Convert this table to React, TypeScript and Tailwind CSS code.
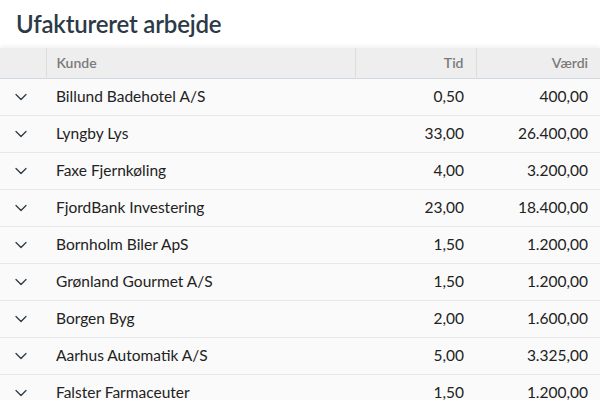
import { ChevronDown } from "lucide-react";

const rows = [
  { kunde: "Billund Badehotel A/S", tid: "0,50", vaerdi: "400,00" },
  { kunde: "Lyngby Lys", tid: "33,00", vaerdi: "26.400,00" },
  { kunde: "Faxe Fjernkøling", tid: "4,00", vaerdi: "3.200,00" },
  { kunde: "FjordBank Investering", tid: "23,00", vaerdi: "18.400,00" },
  { kunde: "Bornholm Biler ApS", tid: "1,50", vaerdi: "1.200,00" },
  { kunde: "Grønland Gourmet A/S", tid: "1,50", vaerdi: "1.200,00" },
  { kunde: "Borgen Byg", tid: "2,00", vaerdi: "1.600,00" },
  { kunde: "Aarhus Automatik A/S", tid: "5,00", vaerdi: "3.325,00" },
  { kunde: "Falster Farmaceuter", tid: "1,50", vaerdi: "1.200,00" },
];

export default function App() {
  return (
    <div className="w-[600px] h-[400px] overflow-hidden bg-white font-['Lato',sans-serif]">
      <h1 className="h-12 px-4 flex items-center text-[24px] font-semibold text-[#2b3a46] tracking-[-0.2px]">
        Ufaktureret arbejde
      </h1>
      <table className="w-full border-collapse shadow-[0_-2px_4px_rgba(0,0,0,0.06)]">
        <thead>
          <tr className="h-[30px] bg-[#eeeeee] border-b border-[#cfd8e0] text-[14px] font-semibold text-[#7a7a7a]">
            <th className="w-[46px] border-r border-[#dddddd]"></th>
            <th className="pl-[10px] text-left font-semibold border-r border-[#dddddd]">Kunde</th>
            <th className="w-[121px] pr-[12px] text-right font-semibold border-r border-[#dddddd]">Tid</th>
            <th className="w-[124px] pr-[12px] text-right font-semibold">Værdi</th>
          </tr>
        </thead>
        <tbody>
          {rows.map((r) => (
            <tr key={r.kunde} className="h-[37px] bg-[#fafafa] border-b border-[#e8e8e8] text-[15.5px] text-[#222]">
              <td className="pl-[11px]">
                <ChevronDown size={20} strokeWidth={1.5} className="text-[#2b3a46]" />
              </td>
              <td className="pl-[10px]">{r.kunde}</td>
              <td className="pr-[12px] text-right">{r.tid}</td>
              <td className="pr-[12px] text-right">{r.vaerdi}</td>
            </tr>
          ))}
        </tbody>
      </table>
    </div>
  );
}
